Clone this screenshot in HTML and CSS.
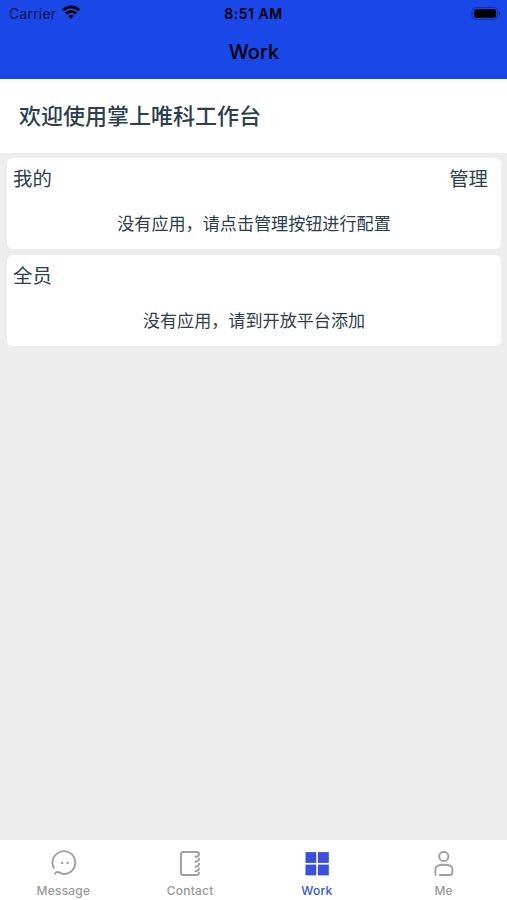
FILE: index.html
```html
<!DOCTYPE html>
<html lang="zh-CN">
<head>
    <meta charset="UTF-8">
    <meta name="viewport" content="width=device-width, initial-scale=1">
    <title>Work</title>
    <link rel="stylesheet" href="styles.css">
</head>
<body>
    <header class="header">
        <div class="status">
            <div class="carrier">
                <span>Carrier</span>
                <svg width="18" height="14" viewBox="0 0 18 14" fill="none" stroke="#000" stroke-width="2.6">
                    <path d="M1 5.2a11.4 11.4 0 0 1 16 0"/>
                    <path d="M4 8.5a7.1 7.1 0 0 1 10 0"/>
                    <path d="M9 13.8L6.2 11a4 4 0 0 1 5.6 0z" fill="#000" stroke="none"/>
                </svg>
            </div>
            <div class="time">8:51 AM</div>
            <div class="battery">
                <svg width="30" height="14" viewBox="0 0 30 14">
                    <rect x="1" y="0.5" width="25.4" height="12" rx="3.2" fill="none" stroke="#000" stroke-opacity="0.3"/>
                    <rect x="3" y="2.2" width="22" height="8.6" rx="2" fill="#000"/>
                    <path d="M27.8 4.6v4c1.8-.7 1.8-3.3 0-4z" fill="#000" fill-opacity="0.4"/>
                </svg>
            </div>
        </div>
        <h1 class="nav-title">Work</h1>
    </header>

    <div class="welcome">欢迎使用掌上唯科工作台</div>

    <main class="content">
        <section class="card">
            <div class="card-head">
                <span>我的</span>
                <span>管理</span>
            </div>
            <div class="empty">没有应用，请点击管理按钮进行配置</div>
        </section>
        <section class="card">
            <div class="card-head">
                <span>全员</span>
            </div>
            <div class="empty">没有应用，请到开放平台添加</div>
        </section>
    </main>

    <nav class="tabbar">
        <a class="tab">
            <svg width="30" height="30" viewBox="0 0 30 30" fill="none" stroke="#a0a0a0" stroke-width="1.9" stroke-linecap="round">
                <path d="M5.8 19.9A11.4 11.4 0 1 1 16.1 26C13.3 26 11.6 24 9.5 24C8.4 24 7.5 24.8 6.9 25.8"/>
                <circle cx="14.1" cy="14.9" r="1.2" fill="#a0a0a0" stroke="none"/>
                <circle cx="19.6" cy="14.9" r="1.2" fill="#a0a0a0" stroke="none"/>
            </svg>
            <span>Message</span>
        </a>
        <a class="tab">
            <svg width="30" height="30" viewBox="0 0 30 30" fill="none" stroke="#a0a0a0" stroke-width="1.9" stroke-linecap="round">
                <path d="M20.5 8.8C23 8.8 24 7.7 24 6.2C24 4.8 23.2 4 21.8 4H8.2C6.8 4 6 4.8 6 6.2V24.8C6 26.2 6.8 27 8.2 27H21.8C23.2 27 24 26.2 24 24.6"/>
                <path d="M24 10.8C24 12.7 22.8 13.6 20.5 13.8M24 15.8C24 17.7 22.8 18.6 20.5 18.8M24 20.4C24 22.2 22.8 23 20.5 23.2"/>
            </svg>
            <span>Contact</span>
        </a>
        <a class="tab active">
            <svg width="30" height="30" viewBox="0 0 30 30" fill="#3b50d9">
                <rect x="3.5" y="4.1" width="10.8" height="10.8"/>
                <rect x="16" y="4.1" width="10.8" height="10.8"/>
                <rect x="3.5" y="16.6" width="10.8" height="10.8"/>
                <rect x="16" y="16.6" width="10.8" height="10.8"/>
            </svg>
            <span>Work</span>
        </a>
        <a class="tab">
            <svg width="30" height="30" viewBox="0 0 30 30" fill="none" stroke="#a0a0a0" stroke-width="1.9" stroke-linecap="round">
                <circle cx="14.8" cy="8.4" r="4.6"/>
                <path d="M6.4 27V21.2C6.4 18.2 9.1 16.8 14.8 16.8C20.6 16.8 23.4 18.2 23.4 21.2V24.6C23.4 26.2 22.6 27 21 27H10.8"/>
            </svg>
            <span>Me</span>
        </a>
    </nav>
</body>
</html>
```
FILE: styles.css
```css
* {
    box-sizing: border-box;
}

body {
    margin: 0;
    height: 100vh;
    display: flex;
    flex-direction: column;
    overflow: hidden;
    background: #ededed;
    color: #2c3e50;
    font-family: Inter, "Noto Sans CJK SC", sans-serif;
}

.header {
    height: 79px;
    flex: none;
    background: #1a47e8;
    color: #000;
}

.status {
    display: grid;
    grid-template-columns: 1fr auto 1fr;
    align-items: center;
    height: 27px;
    padding: 0 6px 0 9px;
    font-size: 14px;
}

.carrier {
    display: flex;
    align-items: center;
    gap: 6px;
    color: #08123c;
    letter-spacing: 0.2px;
}

.carrier svg {
    margin-top: -3px;
}

.time {
    margin-right: 3px;
    font-weight: 600;
    letter-spacing: 0.5px;
}

.battery {
    display: flex;
    justify-content: flex-end;
}

.nav-title {
    margin: 0;
    padding-left: 1px;
    text-align: center;
    font-size: 20px;
    font-weight: 500;
    line-height: 51px;
}

.welcome {
    height: 74px;
    flex: none;
    padding-left: 19px;
    background: #fff;
    font-size: 22px;
    font-weight: 500;
    line-height: 75px;
}

.content {
    flex: 1;
    display: flex;
    flex-direction: column;
    gap: 6px;
    padding: 5px 6px 0 7px;
}

.card {
    height: 91px;
    padding: 0 13px 0 6px;
    border-radius: 6px;
    background: #fff;
}

.card-head {
    display: flex;
    justify-content: space-between;
    font-size: 19.4px;
    line-height: 43px;
}

.empty {
    margin-right: -7px;
    text-align: center;
    font-size: 17.1px;
    line-height: 46px;
}

.tabbar {
    display: flex;
    height: 60px;
    flex: none;
    background: #fff;
}

.tab {
    flex: 1;
    display: flex;
    flex-direction: column;
    align-items: center;
    padding-top: 8px;
    color: #999;
    font-size: 12px;
    font-weight: 500;
    line-height: 14px;
    letter-spacing: 0.2px;
}

.tab span {
    margin-top: 6px;
}

.tab.active {
    color: #3455e0;
}
```
